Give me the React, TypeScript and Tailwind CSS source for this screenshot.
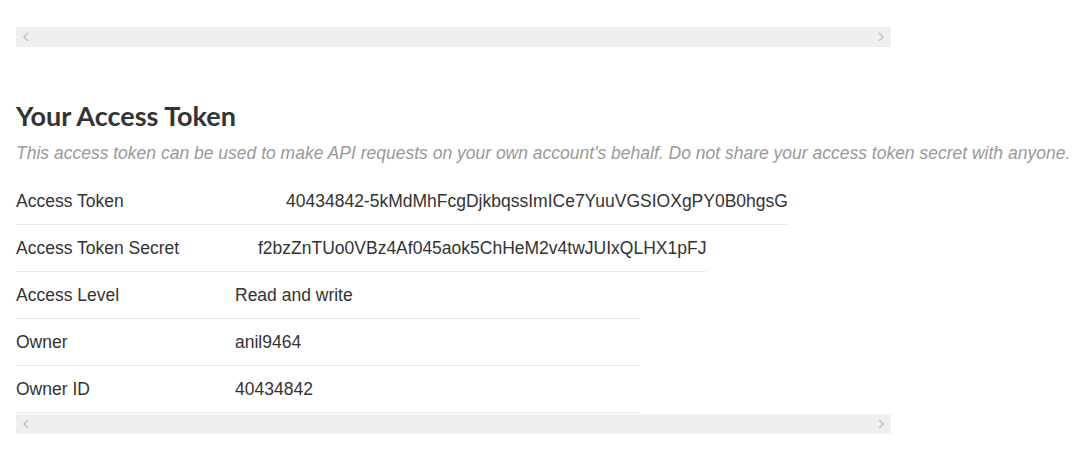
import React from 'react';

const rows = [
  { label: 'Access Token', value: '40434842-5kMdMhFcgDjkbqssImICe7YuuVGSIOXgPY0B0hgsG', width: 'w-[772px]', labelW: 'w-[270px]' },
  { label: 'Access Token Secret', value: 'f2bzZnTUo0VBz4Af045aok5ChHeM2v4twJUIxQLHX1pFJ', width: 'w-[690px]', labelW: 'w-[242px]' },
  { label: 'Access Level', value: 'Read and write', width: 'w-[624px]', labelW: 'w-[219px]' },
  { label: 'Owner', value: 'anil9464', width: 'w-[624px]', labelW: 'w-[219px]' },
  { label: 'Owner ID', value: '40434842', width: 'w-[624px]', labelW: 'w-[219px]' },
];

const ScrollBar = () => (
  <div className="w-[875px] h-[20px] bg-[#efefef] flex items-center justify-between px-[6px]">
    <svg width="8" height="10" viewBox="0 0 8 10">
      <path d="M6 1 L2 5 L6 9" fill="none" stroke="#c4c4c4" strokeWidth="1.6" />
    </svg>
    <svg width="8" height="10" viewBox="0 0 8 10">
      <path d="M2 1 L6 5 L2 9" fill="none" stroke="#c4c4c4" strokeWidth="1.6" />
    </svg>
  </div>
);

export default function App() {
  return (
    <div className="w-[1086px] h-[454px] bg-white overflow-hidden pl-4 pt-[27px] font-['Liberation_Sans',Arial,sans-serif] text-[#333]">
      <ScrollBar />

      <h2 className="mt-[53px] font-['Lato',sans-serif] font-bold text-[27px] leading-[32px] text-[#333] whitespace-nowrap">
        Your Access Token
      </h2>
      <p className="mt-[11px] italic text-[17.5px] leading-[20px] text-[#999] whitespace-nowrap">
        This access token can be used to make API requests on your own account's behalf. Do not share your access token secret with anyone.
      </p>

      <div className="mt-[15px] flex flex-col">
        {rows.map((r) => (
          <div key={r.label} className={`${r.width} h-[47px] flex items-center border-b border-[#e9e9e9] text-[17.5px] whitespace-nowrap`}>
            <div className={`${r.labelW} shrink-0`}>{r.label}</div>
            <div>{r.value}</div>
          </div>
        ))}
      </div>

      <div className="mt-[1px]">
        <ScrollBar />
      </div>
    </div>
  );
}
